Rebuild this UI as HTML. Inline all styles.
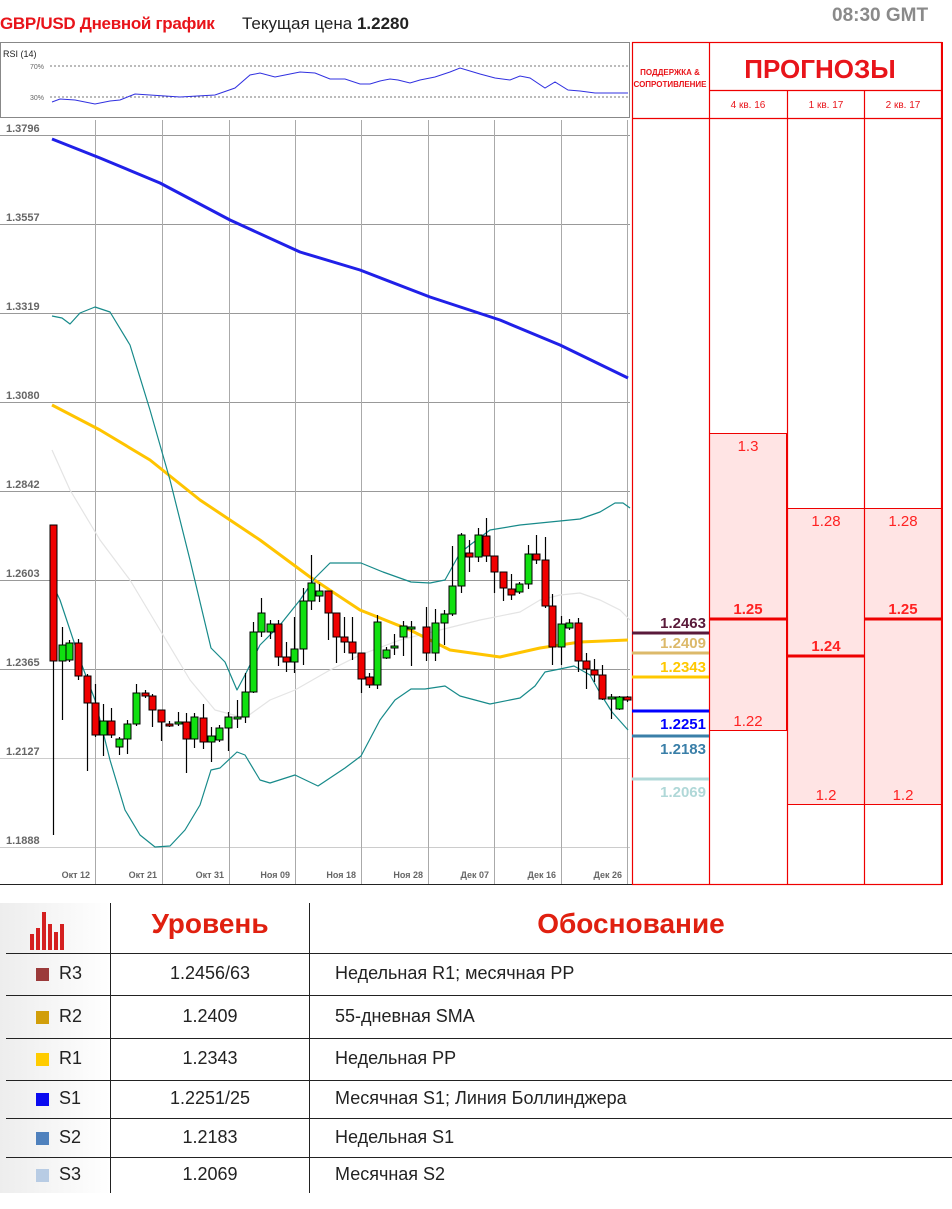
<!DOCTYPE html>
<html><head><meta charset="utf-8">
<style>
body{margin:0;width:952px;height:1209px;background:#fff;font-family:"Liberation Sans",sans-serif;position:relative;overflow:hidden}
.abs{position:absolute}
table{border-collapse:collapse}
</style></head><body>
<div class="abs" style="left:0;top:14px;font-size:17px;color:#e8141a;font-weight:bold;letter-spacing:-0.3px">GBP/USD Дневной график</div>
<div class="abs" style="left:242px;top:14px;font-size:17px;color:#222">Текущая цена <b>1.2280</b></div>
<div class="abs" style="left:832px;top:5px;font-size:19px;color:#8a8a8a;font-weight:bold">08:30 GMT</div>

<svg class="abs" style="left:0;top:0" width="952" height="890" id="ch" xmlns="http://www.w3.org/2000/svg" font-family="Liberation Sans, sans-serif">
<!-- RSI -->
<rect x="0.5" y="42.5" width="629" height="75" fill="#fff" stroke="#888"/>
<text x="3" y="57" font-size="9" fill="#222">RSI (14)</text>
<line x1="50" y1="66" x2="628" y2="66" stroke="#777" stroke-dasharray="2,2"/>
<line x1="50" y1="97" x2="628" y2="97" stroke="#777" stroke-dasharray="2,2"/>
<text x="30" y="69" font-size="7" fill="#666">70%</text>
<text x="30" y="100" font-size="7" fill="#666">30%</text>
<polyline fill="none" stroke="#3030e0" stroke-width="1" points="52,102 60,99 75,100 95,104 110,101 120,100 135,94 150,95 180,97 215,95 235,88 250,75 260,73 275,77 285,75 300,72 315,73 330,79 345,79 360,84 370,84 380,81 390,79 398,80 410,83 420,80 435,77 450,72 460,68 470,71 480,74 495,78 510,80 520,76 530,78 545,88 555,82 568,90 580,91 595,93 610,93 628,93"/>
<!-- main frame -->
<line x1="0" y1="884.5" x2="632" y2="884.5" stroke="#222"/>
<g id="grid"></g>
<g id="lines"></g>
<g id="candles"></g>
<!-- right panel -->
<g fill="#ffe4e4" stroke="#e00" stroke-width="1">
<rect x="709.5" y="433.5" width="77" height="297"/>
<rect x="787.5" y="508.5" width="77" height="296"/>
<rect x="864.5" y="508.5" width="77" height="296"/>
</g>
<g stroke="#e00" stroke-width="1.2" fill="none">
<rect x="632.5" y="42.5" width="309" height="842"/>
<line x1="709.5" y1="42" x2="709.5" y2="884"/>
<line x1="787.5" y1="90" x2="787.5" y2="884"/>
<line x1="864.5" y1="90" x2="864.5" y2="884"/>
<line x1="709" y1="90.5" x2="942" y2="90.5"/>
<line x1="632" y1="118.5" x2="942" y2="118.5"/>
</g>
<line x1="942" y1="42" x2="942" y2="885" stroke="#e00" stroke-width="2"/>
<g stroke="#e00" stroke-width="3">
<line x1="709" y1="619" x2="787" y2="619"/>
<line x1="787" y1="656" x2="864" y2="656"/>
<line x1="864" y1="619" x2="942" y2="619"/>
</g>
<g fill="#e8141a" font-size="8" font-weight="bold" text-anchor="middle">
<text x="670" y="75">ПОДДЕРЖКА &amp;</text>
<text x="670" y="87">СОПРОТИВЛЕНИЕ</text>
<text x="748" y="108" font-size="10" font-weight="normal">4 кв. 16</text>
<text x="826" y="108" font-size="10" font-weight="normal">1 кв. 17</text>
<text x="903" y="108" font-size="10" font-weight="normal">2 кв. 17</text>
<text x="820" y="78" font-size="26">ПРОГНОЗЫ</text>
</g>
<g fill="#f22" font-size="15" text-anchor="middle">
<text x="748" y="451">1.3</text>
<text x="748" y="726">1.22</text>
<text x="826" y="526">1.28</text>
<text x="903" y="526">1.28</text>
<text x="826" y="800">1.2</text>
<text x="903" y="800">1.2</text>
<g font-weight="bold"><text x="748" y="614">1.25</text><text x="826" y="651">1.24</text><text x="903" y="614">1.25</text></g>
</g>
<g stroke-width="3">
<line x1="632" y1="633" x2="709" y2="633" stroke="#5a1a3a"/>
<line x1="632" y1="653" x2="709" y2="653" stroke="#dcb96a"/>
<line x1="632" y1="677" x2="709" y2="677" stroke="#ffc800"/>
<line x1="632" y1="711" x2="709" y2="711" stroke="#0000ff"/>
<line x1="632" y1="736" x2="709" y2="736" stroke="#3a7fa8"/>
<line x1="632" y1="779" x2="709" y2="779" stroke="#b0d8d8"/>
</g>
<g font-size="15" font-weight="bold" text-anchor="end">
<text x="706" y="628" fill="#5a1a3a">1.2463</text>
<text x="706" y="648" fill="#dcb96a">1.2409</text>
<text x="706" y="672" fill="#ffc800">1.2343</text>
<text x="706" y="729" fill="#0000ff">1.2251</text>
<text x="706" y="754" fill="#3a7fa8">1.2183</text>
<text x="706" y="797" fill="#b0d8d8">1.2069</text>
</g>
</svg>

<!-- table -->
<div class="abs" style="left:0;top:903px;width:110px;height:290px;background:linear-gradient(90deg,#ededed,#fff)"></div>
<svg class="abs" style="left:30px;top:912px" width="38" height="40"><g fill="#d42020"><rect x="0" y="22" width="4" height="16"/><rect x="6" y="16" width="4" height="22"/><rect x="12" y="0" width="4" height="38"/><rect x="18" y="12" width="4" height="26"/><rect x="24" y="20" width="4" height="18"/><rect x="30" y="12" width="4" height="26"/></g></svg>
<div class="abs" style="left:110px;top:903px;width:1px;height:290px;background:#222"></div>
<div class="abs" style="left:309px;top:903px;width:1px;height:290px;background:#222"></div>
<div class="abs" style="left:110px;top:908px;width:200px;text-align:center;font-size:28px;font-weight:bold;color:#e02010">Уровень</div>
<div class="abs" style="left:310px;top:908px;width:642px;text-align:center;font-size:28px;font-weight:bold;color:#e02010">Обоснование</div>
<div id="rows"></div>

<script>
var s='http://www.w3.org/2000/svg';
function el(p,t,a){var e=document.createElementNS(s,t);for(var k in a)e.setAttribute(k,a[k]);p.appendChild(e);return e;}
var g=document.getElementById('grid');
var hy=[135,224,313,402,491,580,669,758,847],lb=['1.3796','1.3557','1.3319','1.3080','1.2842','1.2603','1.2365','1.2127','1.1888'];
hy.forEach(function(y,i){el(g,'line',{x1:0,x2:630,y1:y+.5,y2:y+.5,stroke:i>=7?'#ccc':'#999','stroke-width':1});var t=el(g,'text',{x:6,y:y-3,'font-size':11,fill:'#666','font-weight':'bold'});t.textContent=lb[i];});
var vx=[95,162,229,295,361,428,494,561,627],dl=['Окт 12','Окт 21','Окт 31','Ноя 09','Ноя 18','Ноя 28','Дек 07','Дек 16','Дек 26'];
vx.forEach(function(x,i){el(g,'line',{x1:x+.5,x2:x+.5,y1:120,y2:884,stroke:'#aaa','stroke-width':1});var t=el(g,'text',{x:x-5,y:878,'font-size':9,fill:'#666','font-weight':'bold','text-anchor':'end'});t.textContent=dl[i];});
var L=document.getElementById('lines');
function pl(p,c,w){el(L,'polyline',{points:p,fill:'none',stroke:c,'stroke-width':w,'stroke-linejoin':'round'});}
pl('52,450 70,490 100,540 130,580 160,630 190,680 215,710 245,718 270,700 295,690 330,670 360,655 400,640 440,630 480,620 520,612 540,600 560,595 580,593 600,600 620,610 630,620','#e4e4e4',1.2);
pl('52,139 100,158 160,183 230,220 300,252 360,270 430,297 500,320 560,345 628,378','#2020e8',3);
pl('52,405 100,430 150,460 200,500 260,540 310,577 360,610 410,630 450,650 500,657 540,648 580,642 628,640','#ffc400',3);
pl('52,316 62,318 70,324 80,313 95,307 110,312 130,345 150,410 170,480 190,560 211,648 225,662 237,690 245,675 260,645 280,625 300,600 315,578 330,563 361,563 383,572 411,582 430,583 445,580 460,553 470,545 490,530 520,525 560,521 580,519 600,512 615,503 623,503 630,508','#178a8a',1.2);
pl('52,583 60,600 70,630 80,660 95,700 110,760 125,810 140,835 155,847 170,846 185,830 200,805 211,770 220,768 237,752 245,755 260,780 270,783 295,775 318,786 345,768 361,756 380,720 395,700 411,689 425,689 445,686 460,696 490,704 520,698 535,686 545,672 560,669 574,666 590,675 600,693 612,712 628,730','#178a8a',1.2);
var C=[[53,525,661,525,835,'r'],[62,661,645,627,720,'g'],[69,660,643,640,662,'g'],[78,643,676,639,680,'r'],[87,676,703,674,771,'r'],[95,703,735,684,737,'r'],[103,735,721,704,756,'g'],[111,721,735,708,738,'r'],[119,747,739,737,755,'g'],[127,739,724,720,754,'g'],[136,724,693,684,726,'g'],[145,693,696,690,698,'r'],[152,696,710,694,727,'r'],[161,710,722,710,741,'r'],[169,724,726,721,727,'r'],[178,724,722,712,726,'g'],[186,722,739,713,773,'r'],[194,739,717,713,748,'g'],[203,718,742,704,749,'r'],[211,742,736,727,762,'g'],[219,740,728,725,742,'g'],[228,728,717,712,751,'g'],[237,718,717,700,728,'g'],[245,717,692,673,723,'g'],[253,692,632,622,693,'g'],[261,632,613,598,637,'g'],[270,632,624,620,639,'g'],[278,624,657,620,666,'r'],[286,657,662,642,672,'r'],[294,662,649,617,673,'g'],[303,649,601,588,665,'g'],[311,601,583,555,610,'g'],[319,596,591,584,602,'g'],[328,591,613,591,640,'r'],[336,613,637,613,663,'r'],[344,637,642,617,653,'r'],[352,642,653,617,660,'r'],[361,653,679,653,693,'r'],[369,677,685,673,688,'r'],[377,685,622,615,689,'g'],[386,658,650,647,659,'g'],[394,647,646,634,655,'g'],[403,637,626,621,656,'g'],[411,627,627,621,666,'g'],[426,627,653,607,661,'r'],[435,653,623,609,661,'g'],[444,623,614,610,645,'g'],[452,614,586,546,616,'g'],[461,586,535,533,593,'g'],[469,553,557,540,572,'r'],[478,557,535,528,562,'g'],[486,536,556,518,562,'r'],[494,556,572,556,593,'r'],[503,572,588,574,601,'r'],[511,589,595,574,600,'r'],[519,592,584,582,594,'g'],[528,584,554,545,589,'g'],[536,554,560,535,564,'r'],[545,560,606,537,608,'r'],[552,606,647,594,665,'r'],[561,647,624,616,665,'g'],[569,628,623,619,630,'g'],[578,623,661,618,672,'r'],[586,661,669,653,689,'r'],[594,670,675,659,682,'r'],[602,675,699,665,700,'r'],[611,697,698,694,719,'g'],[619,709,697,696,710,'g'],[627,697,700,696,702,'r']];
var K=document.getElementById('candles');
C.forEach(function(c){var x=c[0];el(K,'line',{x1:x+.5,x2:x+.5,y1:c[3],y2:c[4],stroke:'#000','stroke-width':1.2});var t=Math.min(c[1],c[2]),h=Math.max(2,Math.abs(c[1]-c[2]));el(K,'rect',{x:x-3,y:t,width:7,height:h,fill:c[5]=='r'?'#f00000':'#10e010',stroke:'#000','stroke-width':1});});
var R=[['R3','#9b3a3a','1.2456/63','Недельная R1; месячная PP',953,995],['R2','#d19e0a','1.2409','55-дневная SMA',995,1038],['R1','#ffcc00','1.2343','Недельная PP',1038,1080],['S1','#0a0af0','1.2251/25','Месячная S1; Линия Боллинджера',1080,1118],['S2','#4f81bd','1.2183','Недельная S1',1118,1157],['S3','#b8cce4','1.2069','Месячная S2',1157,1193]];
var h='';R.forEach(function(r){var m=(r[4]+r[5])/2;h+='<div class="abs" style="left:6px;top:'+r[4]+'px;width:946px;height:1px;background:#222"></div><div class="abs" style="left:36px;top:'+(m-6)+'px;width:13px;height:13px;background:'+r[1]+'"></div><div class="abs" style="left:59px;top:'+(m-11)+'px;font-size:18px;color:#222">'+r[0]+'</div><div class="abs" style="left:110px;width:200px;text-align:center;top:'+(m-11)+'px;font-size:18px;color:#222">'+r[2]+'</div><div class="abs" style="left:335px;top:'+(m-11)+'px;font-size:18px;color:#222">'+r[3]+'</div>';});
document.getElementById('rows').innerHTML=h;
</script>
</body></html>
